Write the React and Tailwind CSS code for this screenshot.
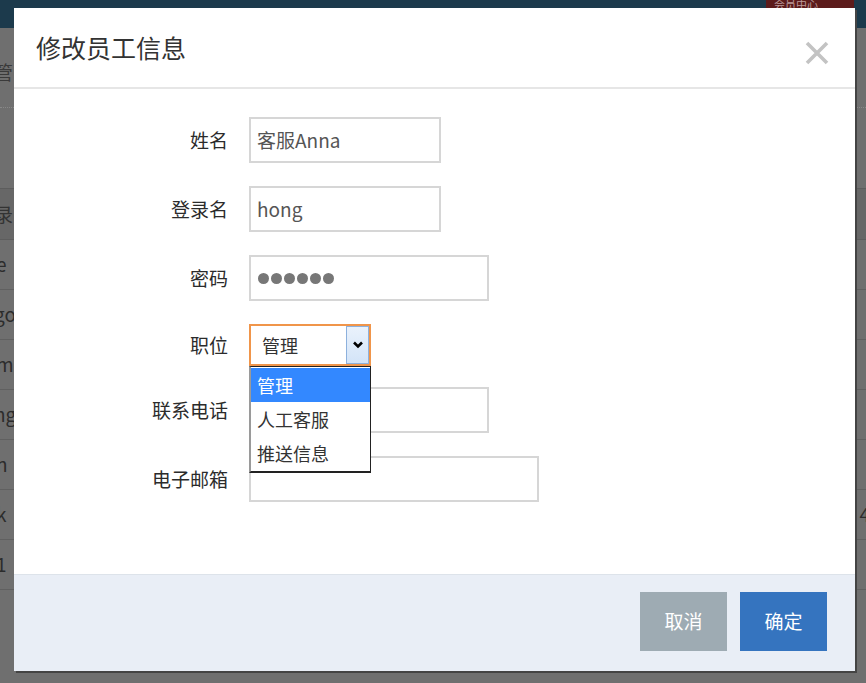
import { useState } from 'react';

const font = { fontFamily: '"Noto Sans CJK SC", "Noto Sans", sans-serif' };

// dimmed page under the modal
const PageBehind = () => {
  const rows = ['e', 'go', 'm', 'ng', 'n', 'k', '1'];
  return (
    <div className="w-[866px] h-[683px] bg-[#6f6f6f] overflow-hidden" style={font}>
      <div className="h-[28px] bg-[#1c3a4c] flex justify-end">
        <div className="w-[88px] h-[10px] mr-[12px] bg-[#5c1b1b] text-[#b99] text-[11px] leading-[8px] overflow-hidden px-2">会员中心</div>
      </div>
      <div className="h-[80px] border-b border-dotted border-[#888] flex items-center pt-[10px]">
        <span className="text-[#3a3a3a] text-[19px] -ml-[6px]">管</span>
      </div>
      <div className="h-[80px]" />
      <div className="h-[52px] bg-[#676767] border-y border-[#5d5d5d] flex items-center justify-between">
        <span className="text-[#333] text-[19px] -ml-[6px]">录</span>
        <span />
      </div>
      {rows.map((r, i) => (
        <div key={i} className="h-[50px] border-b border-[#606060] flex items-center justify-between">
          <span className="text-[#2c2c2c] text-[19px]" style={{ marginLeft: r.length > 1 ? -6 : -4 }}>{r}</span>
          <span className="text-[#2c2c2c] text-[19px] mr-[-4px]">{r === 'k' ? '4' : ''}</span>
        </div>
      ))}
    </div>
  );
};

const Field = ({ label, children, className = '' }) => (
  <div className={`flex items-center ${className}`}>
    <div className="w-[214px] text-right text-[19px] text-[#2b2b2b]">{label}</div>
    <div className="ml-[21px]">{children}</div>
  </div>
);

const TextBox = ({ value, width, children }) => (
  <div
    className="h-[46px] border-2 border-[#d6d6d6] bg-white flex items-center px-[6px] text-[19px] text-[#555]"
    style={{ width }}
  >
    {children ?? value}
  </div>
);

export default function App() {
  const [role, setRole] = useState('管理');
  const options = ['管理', '人工客服', '推送信息'];

  return (
    <div className="relative w-[866px] h-[683px] overflow-hidden" style={font}>
      <PageBehind />

      <div className="absolute left-[14px] top-[8px] w-[841px] h-[663px] bg-white flex flex-col shadow-[2px_2px_0_#444]">
        {/* header */}
        <div className="h-[81px] border-b-2 border-[#e6e6e6] flex items-center justify-between pl-[22px] pr-[26px] shrink-0">
          <h3 className="text-[25px] text-[#333] font-normal">修改员工信息</h3>
          <button type="button" className="w-[24px] h-[24px] flex items-center justify-center mt-[10px]">
            <svg width="24" height="24" viewBox="0 0 24 24">
              <path d="M2 2 L22 22 M22 2 L2 22" stroke="#c3c3c3" strokeWidth="3.6" strokeLinecap="butt" />
            </svg>
          </button>
        </div>

        {/* body */}
        <div className="flex-1 pt-[28px]">
          <Field label="姓名">
            <TextBox value="客服Anna" width={192} />
          </Field>
          <Field label="登录名" className="mt-[23px]">
            <TextBox value="hong" width={192} />
          </Field>
          <Field label="密码" className="mt-[23px]">
            <TextBox width={240}>
              <div className="flex gap-[2px] pl-[1px]">
                {[0, 1, 2, 3, 4, 5].map((d) => (
                  <span key={d} className="w-[11px] h-[11px] rounded-full bg-[#777]" />
                ))}
              </div>
            </TextBox>
          </Field>
          <Field label="职位" className="mt-[23px] relative z-10">
            <div className="relative">
              <div className="w-[122px] h-[42px] border-2 border-[#f0954a] bg-white flex items-center justify-between">
                <span className="pl-[11px] text-[18px] text-[#333]">{role}</span>
                <span className="w-[23px] h-[38px] border border-[#8db1dd] bg-gradient-to-b from-[#eaf2fc] to-[#d3e4f8] flex items-center justify-center">
                  <svg width="10" height="8" viewBox="0 0 10 8">
                    <path d="M1 1.5 L5 5.5 L9 1.5" fill="none" stroke="#000" strokeWidth="2.6" />
                  </svg>
                </span>
              </div>
              <ul className="absolute left-0 top-[42px] w-[122px] bg-white border border-[#222] border-l-[2px] border-l-[#9a9a9a] border-b-2 pt-[1px] pb-[1px]">
                {options.map((o) => (
                  <li
                    key={o}
                    onClick={() => setRole(o)}
                    className={`h-[34px] pl-[6px] flex items-center text-[18px] cursor-default ${
                      o === role ? 'bg-[#3388ff] text-white' : 'text-[#333]'
                    }`}
                  >
                    {o}
                  </li>
                ))}
              </ul>
            </div>
          </Field>
          <Field label="联系电话" className="mt-[21px]">
            <TextBox value="" width={240} />
          </Field>
          <Field label="电子邮箱" className="mt-[23px]">
            <TextBox value="" width={290} />
          </Field>
        </div>

        {/* footer */}
        <div className="h-[97px] shrink-0 bg-[#e9eef6] border-t border-[#dde3ea] flex items-start justify-end gap-[13px] pt-[17px] pr-[28px]">
          <button type="button" className="w-[87px] h-[59px] bg-[#9eabb3] text-white text-[19px]">取消</button>
          <button type="button" className="w-[87px] h-[59px] bg-[#3574bf] text-white text-[19px]">确定</button>
        </div>
      </div>
    </div>
  );
}
